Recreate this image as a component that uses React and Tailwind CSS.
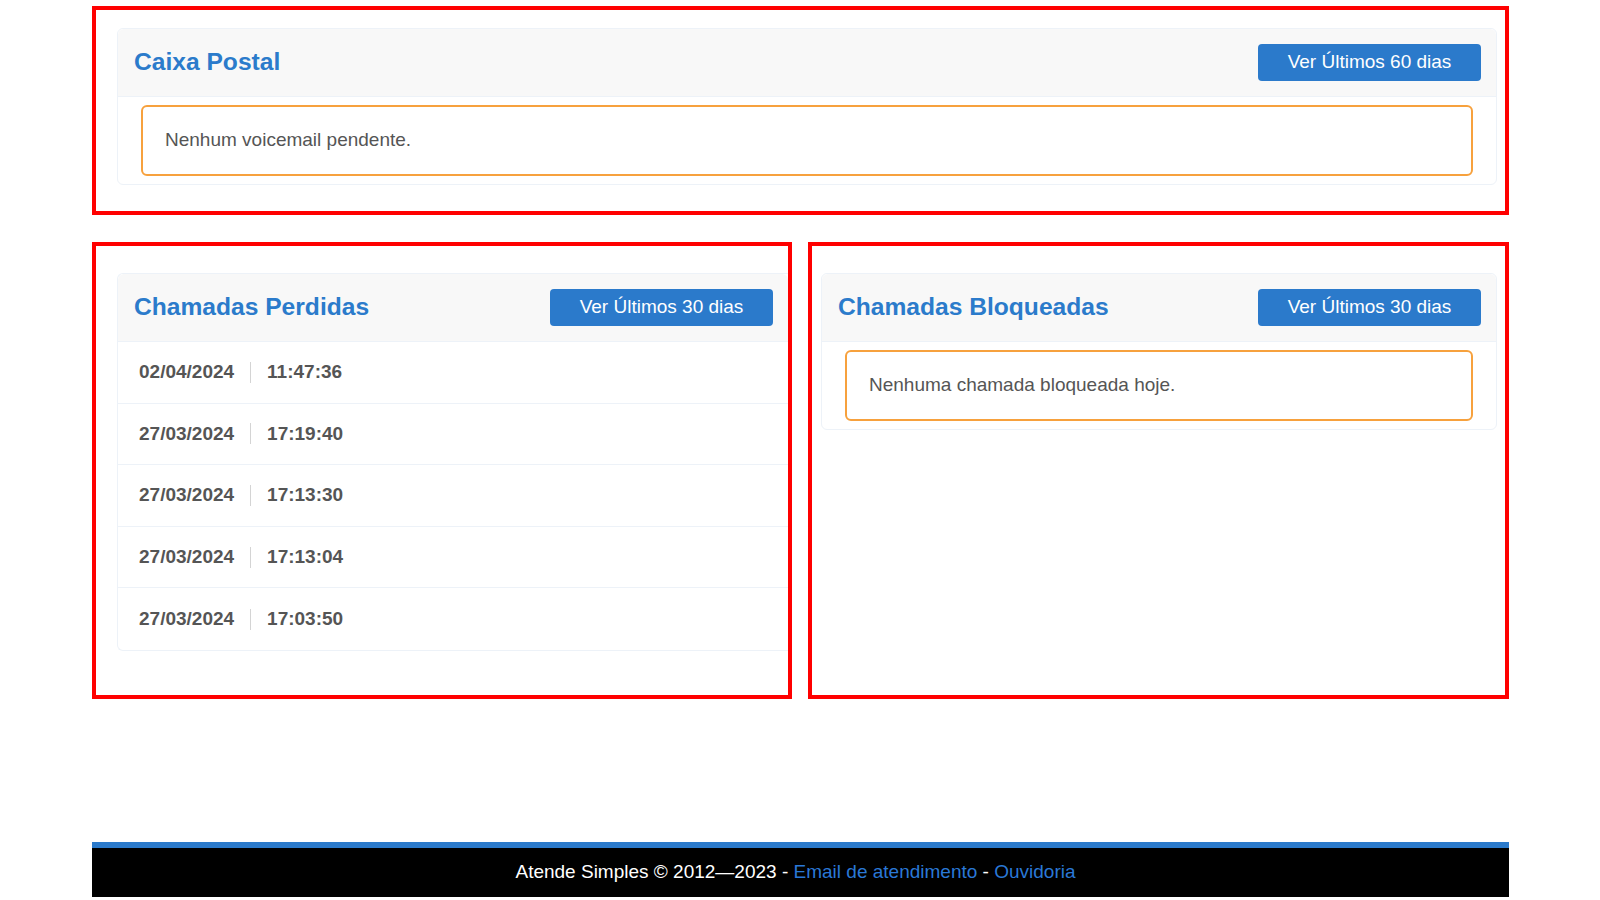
export default function App() {
  const rows = [
    ["02/04/2024", "11:47:36"],
    ["27/03/2024", "17:19:40"],
    ["27/03/2024", "17:13:30"],
    ["27/03/2024", "17:13:04"],
    ["27/03/2024", "17:03:50"],
  ];
  const Header = ({ title, btn }) => (
    <div className="h-[68px] flex items-center justify-between pl-[16px] pr-[15px] bg-[#f8f8f8] border-b border-[#edf2f8] rounded-t-[6px]">
      <h2 className="text-[24.6px] font-bold text-[#2b7bcb] leading-none">{title}</h2>
      <button className="w-[223px] h-[37px] rounded-[4px] bg-[#2b7acb] text-white text-[19px] leading-none flex items-center justify-center pb-[3px]">
        {btn}
      </button>
    </div>
  );
  const Alert = ({ text }) => (
    <div className="px-[23px] py-[8px]">
      <div className="h-[71px] border-2 border-[#f7a13d] rounded-[6px] flex items-center pl-[22px] pb-[1px] text-[19px] text-[#555]">
        {text}
      </div>
    </div>
  );
  return (
    <div className="w-[1600px] h-[900px] bg-white font-['Liberation_Sans',Arial,sans-serif] overflow-hidden">
      <div className="ml-[92px] w-[1417px] flex flex-col">
        <div className="mt-[6px] h-[209px] border-4 border-[#ff0000] pt-[18px] pl-[21px] pr-[8px]">
          <div className="border border-[#edf2f8] rounded-[6px]">
            <Header title="Caixa Postal" btn="Ver Últimos 60 dias" />
            <Alert text="Nenhum voicemail pendente." />
          </div>
        </div>
        <div className="mt-[27px] grid grid-cols-[700px_701px] gap-[16px] h-[457px]">
          <div className="border-4 border-[#ff0000] pt-[27px] pl-[21px]">
            <div className="border border-r-0 border-[#edf2f8] rounded-l-[6px]">
              <Header title="Chamadas Perdidas" btn="Ver Últimos 30 dias" />
              {rows.map(([d, t], i) => (
                <div
                  key={i}
                  className={`h-[61.6px] flex items-center pl-[21px] text-[19px] font-bold text-[#555] ${i < rows.length - 1 ? "border-b border-[#edf2f8]" : ""}`}
                >
                  <span>{d}</span>
                  <span className="mx-[16px] w-px h-[21px] bg-[#d4d4d4]" />
                  <span>{t}</span>
                </div>
              ))}
            </div>
          </div>
          <div className="border-4 border-[#ff0000] pt-[27px] pl-[9px] pr-[8px]">
            <div className="border border-[#edf2f8] rounded-[6px]">
              <Header title="Chamadas Bloqueadas" btn="Ver Últimos 30 dias" />
              <Alert text="Nenhuma chamada bloqueada hoje." />
            </div>
          </div>
        </div>
        <div className="mt-[143px] h-[55px] border-t-[6px] border-[#2b7acb] bg-black flex items-center justify-center text-[19px] text-white">
          <span className="-ml-[10px]">
            Atende Simples © 2012—2023 - <a className="text-[#2a78d6]">Email de atendimento</a> -{" "}
            <a className="text-[#2a78d6]">Ouvidoria</a>
          </span>
        </div>
      </div>
    </div>
  );
}
